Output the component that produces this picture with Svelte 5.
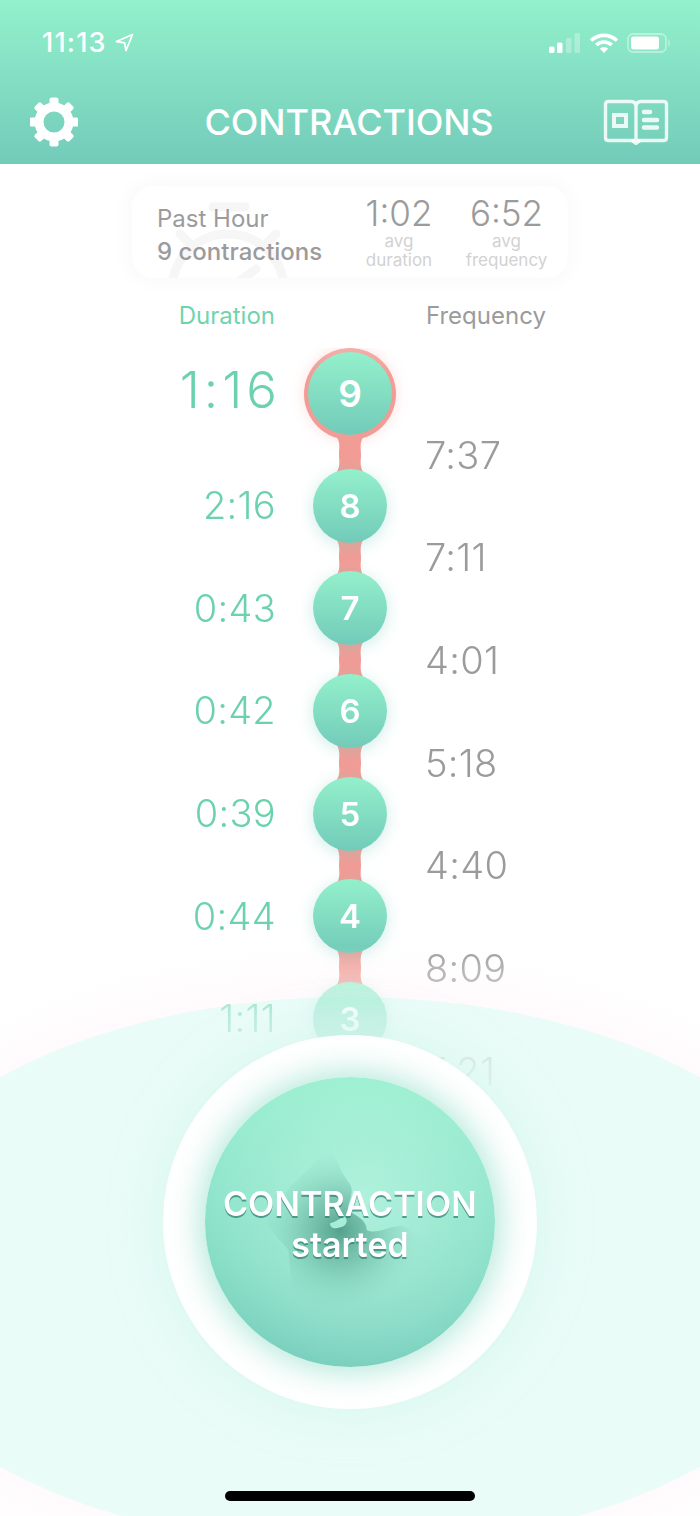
<script lang="ts">
  const numbers = [8, 7, 6, 5, 4, 3];
  const durations = ['2:16', '0:43', '0:42', '0:39', '0:44', '1:11'];
  const frequencies = ['7:37', '7:11', '4:01', '5:18', '4:40', '8:09', '7:21'];
  const teeth = [0, 45, 90, 135, 180, 225, 270, 315];
</script>

<div class="screen">
  <header class="header">
    <div class="status">
      <div class="clock">
        <span>11:13</span>
        <svg width="19" height="19" viewBox="0 0 19 19" fill="none" stroke="#fff" stroke-width="1.8" stroke-linejoin="round">
          <path d="M1.5 8.5 17.5 1.5 11 17.5 9.6 9.8Z" />
        </svg>
      </div>
      <div class="indicators">
        <svg width="32" height="20" viewBox="0 0 32 20" fill="#fff">
          <rect x="0" y="13.5" width="5.5" height="6.5" rx="1.5" />
          <rect x="8" y="9.5" width="5.5" height="10.5" rx="1.5" />
          <rect x="17" y="5" width="5.5" height="15" rx="1.5" opacity="0.3" />
          <rect x="25.5" y="0" width="5.5" height="20" rx="1.5" opacity="0.3" />
        </svg>
        <svg width="30" height="20" viewBox="0 0 30 20" fill="none" stroke="#fff" stroke-width="3.6">
          <path d="M2 7.5C9.5 .6 20.5 .6 28 7.5" />
          <path d="M7.2 12C11.8 8 18.2 8 22.8 12" />
          <path d="M15 20 10.8 15.6C13 13.7 17 13.7 19.2 15.6Z" fill="#fff" stroke="none" />
        </svg>
        <svg width="44" height="20" viewBox="0 0 44 20" fill="none">
          <rect x="1" y="1" width="38" height="18" rx="5" stroke="#fff" stroke-width="1.8" opacity="0.4" />
          <rect x="4" y="3.5" width="28" height="13" rx="2.5" fill="#fff" />
          <path d="M41.5 6.5C43.3 7.5 43.3 12.5 41.5 13.5Z" fill="#fff" opacity="0.5" />
        </svg>
      </div>
    </div>
    <nav class="nav">
      <svg width="48" height="50" viewBox="-24 -25 48 50">
        <path
          fill="#fff"
          fill-rule="evenodd"
          d="M0-19.5A19.5 19.5 0 1 1 0 19.5A19.5 19.5 0 1 1 0-19.5ZM0-10.5A10.5 10.5 0 1 0 0 10.5A10.5 10.5 0 1 0 0-10.5Z"
        />
        {#each teeth as angle}
          <rect x="-4.5" y="-24.5" width="9" height="8" rx="2" fill="#fff" transform="rotate({angle})" />
        {/each}
      </svg>
      <h1>CONTRACTIONS</h1>
      <svg class="book" width="66" height="46" viewBox="0 0 66 46" fill="none" stroke="#fff" stroke-opacity="0.85" stroke-width="3.4">
        <path d="M33 41.5H5.5Q2.5 41.5 2.5 38.5V5.5Q2.5 2.5 5.5 2.5H28Q33 2.5 33 8ZM33 41.5H60.5Q63.5 41.5 63.5 38.5V5.5Q63.5 2.5 60.5 2.5H38Q33 2.5 33 8Z" />
        <path d="M29 41.5 33 44.5 37 41.5" />
        <rect x="11" y="16" width="12" height="11" stroke-width="4" />
        <path stroke-width="4.5" stroke-linecap="round" d="M41 13H47M41 21H54M41 28.5H54" />
      </svg>
    </nav>
  </header>

  <section class="summary">
    <svg class="watermark" width="130" height="92" viewBox="0 0 130 92" fill="none" stroke="#f6f6f6" stroke-width="9">
      <circle cx="62" cy="104" r="56" />
      <path d="M47 21H79" stroke-linecap="round" />
      <path d="M14 48 26 60M110 48 98 60M62 104 90 83" stroke-linecap="round" />
    </svg>
    <div class="past">
      <div>Past Hour</div>
      <div class="count">9 contractions</div>
    </div>
    <div class="avg avg-duration">
      <div class="avg-value">1:02</div>
      <div class="avg-label">avg<br />duration</div>
    </div>
    <div class="avg avg-frequency">
      <div class="avg-value">6:52</div>
      <div class="avg-label">avg<br />frequency</div>
    </div>
  </section>

  <div class="labels">
    <div class="label-duration">Duration</div>
    <div class="label-frequency">Frequency</div>
  </div>

  <div class="halo"></div>

  <main class="timeline">
    <div class="col-duration">
      <div class="latest">1:16</div>
      {#each durations as value}
        <div class="time">{value}</div>
      {/each}
    </div>
    <div class="track">
      <div class="current"><div class="bubble big">9</div></div>
      {#each numbers as n}
        <svg class="link" width="30" height="41" viewBox="0 0 30 41">
          <path d="M0 0C6 8 4 14 4 20.5C4 27 6 33 0 41H30C24 33 26 27 26 20.5C26 14 24 8 30 0Z" fill="#f29c96" />
        </svg>
        <div class="bubble">{n}</div>
      {/each}
    </div>
    <div class="col-frequency">
      {#each frequencies as value}
        <div class="time">{value}</div>
      {/each}
    </div>
  </main>

  <div class="panel">
    <button class="ring" type="button">
      <span class="disc">
        <svg class="fetus" width="290" height="290" viewBox="45 21 870 870">
          <defs>
            <radialGradient id="shade" gradientUnits="userSpaceOnUse" cx="450" cy="480" r="240">
              <stop offset="0" stop-color="#3f8f7a" stop-opacity="0.8" />
              <stop offset="0.45" stop-color="#4f9f8a" stop-opacity="0.42" />
              <stop offset="1" stop-color="#7fd0b8" stop-opacity="0" />
            </radialGradient>
          </defs>
          <path
            fill="url(#shade)"
            fill-rule="evenodd"
            d="M420 235C445 270 445 300 475 335C500 365 470 400 475 420C490 435 530 445 530 480C560 495 590 470 630 468C670 470 690 530 725 555C690 555 650 575 650 600C665 630 665 660 650 690L640 760H340C300 640 300 590 295 540C270 510 240 480 225 455L300 350ZM420 460C440 455 455 440 465 440C475 450 470 470 450 472C435 478 420 475 420 460Z"
          />
        </svg>
        <span class="disc-text">CONTRACTION<br />started</span>
      </span>
    </button>
    <div class="home"></div>
  </div>
</div>

<style>
  :global(body) {
    margin: 0;
    background: #fff;
  }

  .screen {
    position: relative;
    width: 700px;
    height: 1516px;
    overflow: hidden;
    background: #fff;
    font-family: Inter, 'Liberation Sans', sans-serif;
  }

  .header {
    height: 164px;
    box-sizing: border-box;
    padding: 0 32px 0 30px;
    background: linear-gradient(180deg, #93f1cc 0%, #72cbb9 100%);
    color: #fff;
  }

  .status {
    display: flex;
    justify-content: space-between;
    align-items: center;
    height: 84px;
    padding-left: 12px;
  }

  .clock {
    display: flex;
    align-items: center;
    gap: 8px;
    font-size: 27px;
    font-weight: 500;
    letter-spacing: 1.2px;
  }

  .indicators {
    display: flex;
    align-items: center;
    gap: 8px;
    margin-right: -3px;
    padding-top: 2px;
  }

  .nav {
    display: grid;
    grid-template-columns: 1fr auto 1fr;
    align-items: center;
    height: 76px;
  }

  .nav h1 {
    margin: 0;
    font-size: 36px;
    font-weight: 500;
    letter-spacing: -0.1px;
  }

  .book {
    justify-self: end;
    margin-right: -1px;
  }

  .summary {
    position: relative;
    display: flex;
    align-items: flex-start;
    width: 436px;
    height: 92px;
    box-sizing: border-box;
    margin: 22px auto 0;
    padding: 8.5px 20px 0 25px;
    border-radius: 22px;
    color: #9b9b9b;
    background: #fff;
    box-shadow: 0 0 18px 8px rgba(0, 0, 0, 0.018);
    overflow: hidden;
    clip-path: inset(-30px round 30px);
  }

  .watermark {
    position: absolute;
    left: 34px;
    top: 0;
  }

  .past {
    position: relative;
    flex: 1;
    padding-top: 7.5px;
    font-size: 24px;
    line-height: 33px;
  }

  .count {
    font-weight: 500;
  }

  .avg {
    position: relative;
    text-align: center;
  }

  .avg-duration {
    width: 68px;
  }

  .avg-frequency {
    width: 83px;
    margin-left: 32px;
  }

  .avg-value {
    font-size: 35px;
    font-weight: 300;
    line-height: 37px;
  }

  .avg-label {
    font-size: 17px;
    line-height: 19px;
    color: #d2d2d2;
  }

  .labels {
    display: grid;
    grid-template-columns: 275px 1fr;
    column-gap: 151px;
    margin-top: 23px;
    font-size: 24px;
    line-height: 30px;
  }

  .label-duration {
    text-align: right;
    color: #6fd4ae;
  }

  .label-frequency {
    color: #9b9b9b;
  }

  .halo {
    position: absolute;
    left: -146px;
    top: 997px;
    width: 992px;
    height: 550px;
    border-radius: 50%;
    background: #eafcf8;
    box-shadow: 0 0 40px 24px rgba(255, 240, 246, 0.3);
  }

  .timeline {
    position: relative;
    display: grid;
    grid-template-columns: 275px 100px 1fr;
    column-gap: 25px;
    height: 820px;
    margin-top: 17px;
    overflow: hidden;
    mask-image: linear-gradient(180deg, #000 0%, #000 73%, rgba(0, 0, 0, 0.75) 75.6%, rgba(0, 0, 0, 0.38) 81.7%, rgba(0, 0, 0, 0.16) 88%, rgba(0, 0, 0, 0.05) 95%);
  }

  .time {
    height: 102.67px;
    line-height: 102.67px;
    font-size: 38px;
    font-weight: 300;
    letter-spacing: 0.3px;
    white-space: nowrap;
  }

  .col-duration {
    margin-right: -1px;
    text-align: right;
    color: #6bd2ad;
  }

  .latest {
    height: 106px;
    line-height: 84px;
    margin-right: -5px;
    font-size: 51px;
    font-weight: 300;
    letter-spacing: 4px;
  }

  .col-frequency {
    padding-top: 55.6px;
    color: #9b9b9b;
  }

  .track {
    display: flex;
    flex-direction: column;
    align-items: center;
  }

  .current {
    position: relative;
    z-index: 1;
    width: 92px;
    height: 92px;
    box-sizing: border-box;
    padding: 4px 4px 5px;
    border-radius: 50%;
    background: linear-gradient(180deg, #f4aeaa 0%, #f29c96 30%);
    box-shadow: 0 0 14px rgba(242, 156, 150, 0.3);
  }

  .bubble {
    position: relative;
    z-index: 1;
    flex: none;
    width: 74px;
    height: 74px;
    display: flex;
    align-items: center;
    justify-content: center;
    border-radius: 50%;
    background: linear-gradient(180deg, #93f0cb 0%, #72cbb9 100%);
    box-shadow: 0 3px 16px rgba(114, 203, 185, 0.35);
    color: #fff;
    font-size: 33px;
    font-weight: 600;
  }

  .bubble.big {
    width: 84px;
    height: 83px;
    font-size: 37px;
    box-shadow: none;
  }

  .link {
    flex: none;
    display: block;
    margin: -6.17px 0;
  }

  .panel {
    position: absolute;
    left: 0;
    right: 0;
    top: 997px;
    height: 519px;
  }

  .ring {
    position: absolute;
    left: 163px;
    top: 38px;
    width: 374px;
    height: 374px;
    display: flex;
    align-items: center;
    justify-content: center;
    padding: 0;
    border: none;
    border-radius: 50%;
    background: #fff;
    box-shadow: 0 0 40px 10px rgba(205, 245, 233, 0.5);
    font: inherit;
  }

  .disc {
    position: relative;
    display: flex;
    align-items: center;
    justify-content: center;
    width: 290px;
    height: 290px;
    border-radius: 50%;
    overflow: hidden;
    background:
      radial-gradient(circle at 55% 42%, rgba(190, 246, 228, 0.75) 0%, rgba(175, 240, 222, 0.4) 55%, rgba(170, 240, 220, 0) 82%),
      linear-gradient(180deg, #93f0cb 0%, #72cbb9 100%);
    box-shadow: 0 0 30px 6px rgba(120, 215, 190, 0.55);
  }

  .fetus {
    position: absolute;
    left: 0;
    top: 0;
  }

  .disc-text {
    position: relative;
    margin-top: 3px;
    color: #fff;
    font-size: 34px;
    line-height: 41px;
    font-weight: 600;
    text-align: center;
    text-shadow: 0 2px 0 rgba(50, 130, 120, 0.75);
  }

  .home {
    position: absolute;
    left: 225px;
    top: 494px;
    width: 250px;
    height: 10px;
    border-radius: 5px;
    background: #000;
  }
</style>
